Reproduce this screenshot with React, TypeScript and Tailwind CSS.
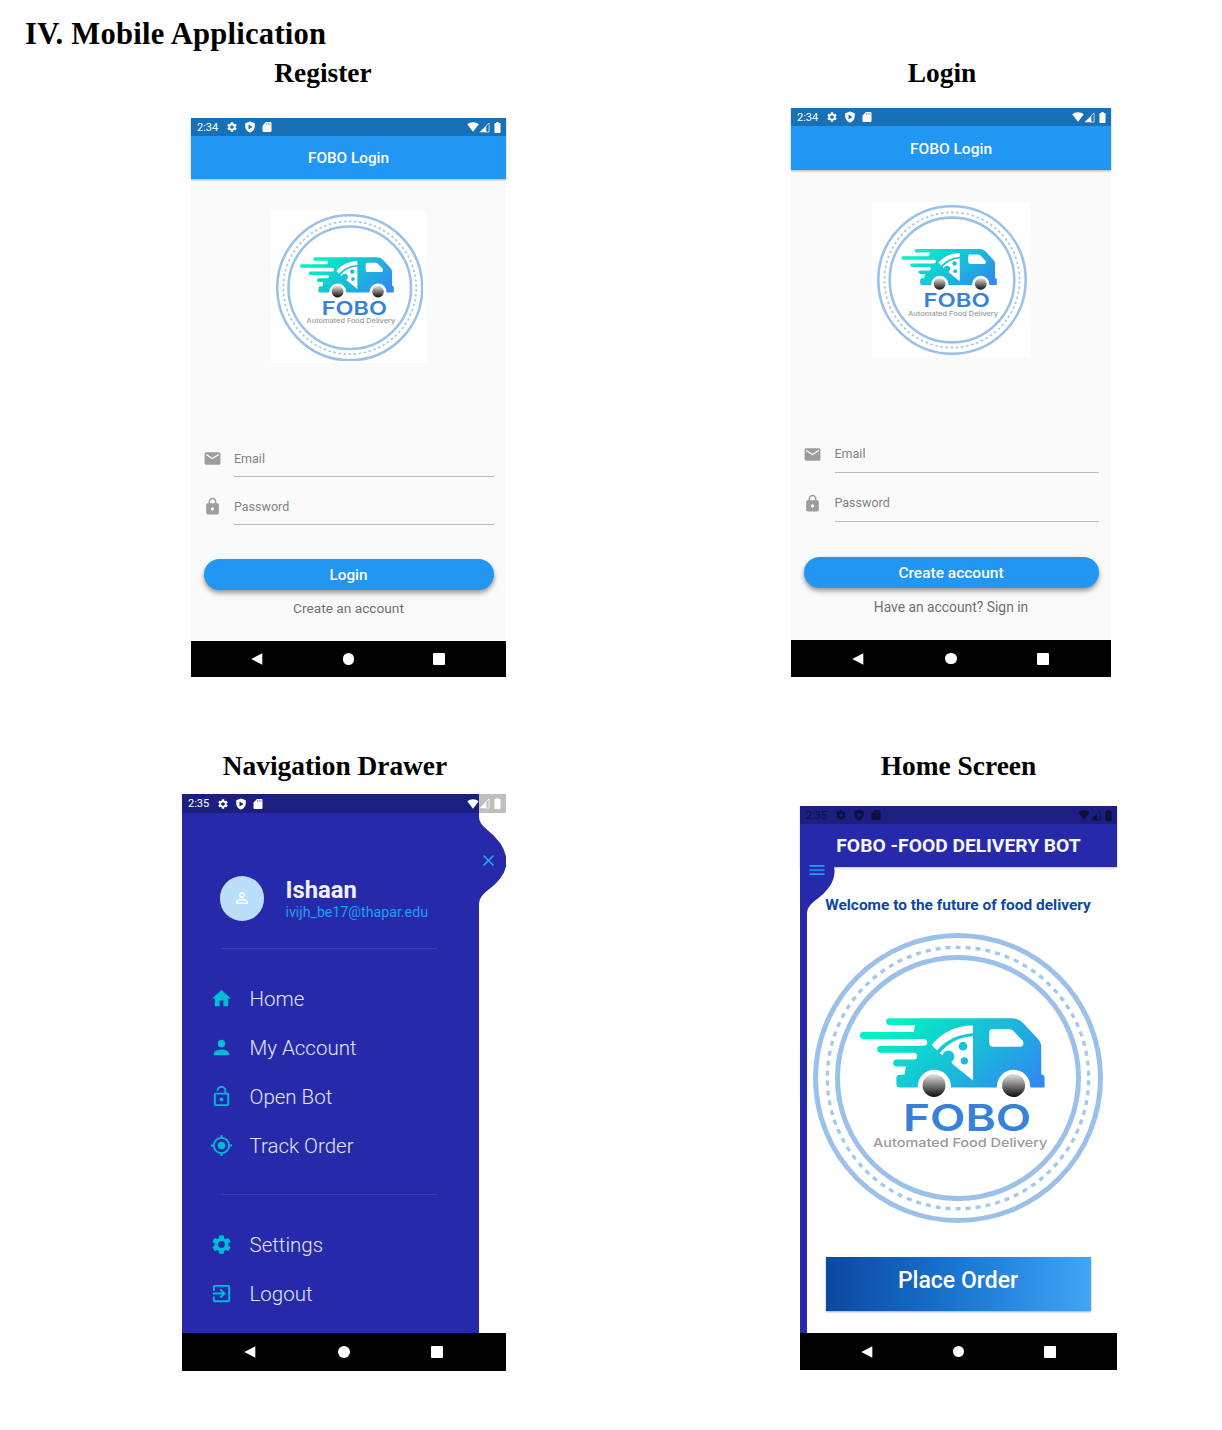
import React, { useId } from "react";
import {
  MdEmail,
  MdLock,
  MdHome,
  MdPerson,
  MdPersonOutline,
  MdLockOpen,
  MdMyLocation,
  MdSettings,
  MdExitToApp,
  MdClose,
  MdMenu,
} from "react-icons/md";

function FoboLogo({ className }: { className: string }) {
  const id = useId();
  const body = `${id}-body`;
  const wheel = `${id}-wheel`;
  return (
    <svg viewBox="38.5 24 871 871" className={className}>
      <defs>
        <linearGradient id={body} gradientUnits="userSpaceOnUse" x1="330" y1="250" x2="600" y2="560">
          <stop offset="0" stopColor="#00f2c3" />
          <stop offset="0.5" stopColor="#18bfd8" />
          <stop offset="1" stopColor="#2f8bf0" />
        </linearGradient>
        <linearGradient id={wheel} x1="0" y1="0" x2="0" y2="1">
          <stop offset="0" stopColor="#e4e4e4" />
          <stop offset="1" stopColor="#0c0c0c" />
        </linearGradient>
      </defs>
      <circle cx="474" cy="459.5" r="428" fill="#fff" stroke="#9bc1ea" strokeWidth="15" />
      <circle cx="474" cy="459.5" r="392.5" fill="none" stroke="#a6c8ec" strokeWidth="10" strokeDasharray="15 15.074" strokeDashoffset="-7" />
      <circle cx="474" cy="459.5" r="362" fill="none" stroke="#9bc1ea" strokeWidth="15" />
      <path
        fill={`url(#${body})`}
        d="M268 280H632Q655 280 668 293L713 341Q724 352 724 366V448Q734 450 734 458V488H299Q289 488 289 478V460Q289 450 299 450H313L318 425H290A10.5 10.5 0 0 1 290 404H341A10 10 0 0 0 341 384H242A10.5 10.5 0 0 1 242 363H371A10.5 10.5 0 0 0 371 342H190A10.5 10.5 0 0 1 190 321H341L345 300H268A10 10 0 0 1 268 280Z"
      />
      <path fill="#fff" d="M578 312H626Q634 312 639 317L667 346Q672 352 670 359Q668 366 660 366H580Q568 366 568 354V322Q568 312 578 312Z" />
      <path fill="#fff" d="M395 360Q442 303 519 302V325Q450 330 411 377Z" />
      <path fill="#fff" d="M519 334V467L418 386Q457 338 519 334Z" />
      <g fill={`url(#${body})`}>
        <circle cx="445" cy="395" r="18" />
        <path d="M420 386L458 414L446 420L412 392Z" />
        <circle cx="489" cy="364" r="13" />
        <circle cx="493" cy="408" r="11" />
      </g>
      <path fill="#fff" d="M353 492V485A50 50 0 0 1 453 485V492Z M591 492V485A50 50 0 0 1 691 485V492Z" />
      <circle cx="402" cy="482" r="34.5" fill={`url(#${wheel})`} />
      <circle cx="641" cy="482" r="34.5" fill={`url(#${wheel})`} />
      <text x="309" y="619" textLength="385" lengthAdjust="spacingAndGlyphs" fontFamily="Inter" fontWeight="600" fontSize="112" fill="#3582d8">
        FOBO
      </text>
      <text x="219" y="666" textLength="523" lengthAdjust="spacingAndGlyphs" fontFamily="Inter" fontWeight="500" fontSize="37" fill="#9a9a9a">
        Automated Food Delivery
      </text>
    </svg>
  );
}

function StatusBar({ time, className }: { time: string; className: string }) {
  return (
    <div className={`flex shrink-0 items-center bg-black/25 pl-[6px] pr-[5px] text-[11px] leading-none ${className}`}>
      <span className="w-[29px]">{time}</span>
      <MdSettings className="size-[12px]" />
      <svg viewBox="0 0 24 24" className="ml-[5.500px] size-[12px]" fill="currentColor">
        <path fillRule="evenodd" d="M12 1L2.500 4.500V11C2.500 16.500 6.800 21.700 12 23C17.200 21.700 21.500 16.500 21.500 11V4.500ZM9 7L17 12L9 17Z" />
      </svg>
      <svg viewBox="0 0 24 24" className="ml-[5px] size-[12px]" fill="currentColor">
        <path fillRule="evenodd" d="M10 2H19Q21 2 21 4V20Q21 22 19 22H5Q3 22 3 20V9ZM10 5V7H12V5ZM13.500 5V7H15.500V5ZM17 5V7H19V5Z" />
      </svg>
      <svg viewBox="0 0 24 24" className="ml-auto h-[12px] w-[12px]" fill="currentColor">
        <path d="M12 2.500C7.500 2.500 3.500 4 .5 6.500L12 21.500L23.500 6.500C20.500 4 16.500 2.500 12 2.500Z" />
      </svg>
      <svg viewBox="0 0 24 24" className="size-[11px]" fill="currentColor">
        <path d="M1 22.500L16 7.500V22.500Z" />
        <path d="M15 8.500L22 2V22H14" fill="none" stroke="currentColor" strokeWidth="2" opacity=".8" />
      </svg>
      <svg viewBox="0 0 12 20" className="ml-[4px] h-[11px] w-[7px]" fill="currentColor">
        <path d="M4 0H8V2H10.500Q11.500 2 11.500 3V19Q11.500 20 10.500 20H1.500Q.5 20 .5 19V3Q.5 2 1.500 2H4Z" />
      </svg>
    </div>
  );
}

function SystemNav({ className }: { className: string }) {
  return (
    <div className={`grid shrink-0 grid-cols-3 place-items-center bg-black px-[6.600%] ${className}`}>
      <svg viewBox="0 0 12 12" className="size-[12px]" fill="#fff">
        <path d="M11.300 .2V11.800L.3 6Z" />
      </svg>
      <span className="size-[11.500px] rounded-full bg-white" />
      <span className="mr-px size-[12px] rounded-[1px] bg-white" />
    </div>
  );
}

function Field({ icon, label, className }: { icon: React.ReactNode; label: string; className: string }) {
  return (
    <div className={`flex items-center ${className}`}>
      <span className="-ml-px w-[31.500px] text-[19px] text-[#9d9d9d]">{icon}</span>
      <span className="flex h-full flex-1 items-center border-b border-[#bcbcbc] pt-[2px] text-[12.500px] text-[#828282]">{label}</span>
    </div>
  );
}

function Heading({ children, className }: { children: React.ReactNode; className: string }) {
  return (
    <h2 className={`text-center font-['Liberation_Serif',serif] text-[27.400px] font-bold leading-[30px] text-black ${className}`}>
      {children}
    </h2>
  );
}

function RegisterScreen() {
  return (
    <div className="ml-[191px] mt-[30px] flex h-[559px] w-[315px] flex-col bg-[#fafafa]">
      <div className="bg-[#2196f3] text-white shadow-[0_1px_2px_rgba(0,0,0,0.3)]">
        <StatusBar time="2:34" className="h-[18px]" />
        <div className="flex h-[43px] items-center justify-center pt-[2px] text-[15.300px] font-medium">FOBO Login</div>
      </div>
      <div className="mx-auto mt-[31.500px] flex h-[152.500px] w-[156px] justify-center bg-white pl-[2px] pt-[3px]">
        <FoboLogo className="size-[147.500px]" />
      </div>
      <div className="mx-[12.500px] mt-[77px] flex flex-col gap-[11px]">
        <Field icon={<MdEmail />} label="Email" className="h-[37px]" />
        <Field icon={<MdLock />} label="Password" className="h-[37px]" />
      </div>
      <button className="mx-[12.500px] mt-[34px] h-[30.500px] rounded-full bg-[#2196f3] pt-[2px] text-[15.300px] font-medium text-white shadow-[0_3px_5px_rgba(0,0,0,0.4)]">
        Login
      </button>
      <span className="mt-[8.500px] text-center text-[13.700px] leading-[20px] text-[#707070]">Create an account</span>
      <SystemNav className="mt-auto h-[36.500px]" />
    </div>
  );
}

function LoginScreen() {
  return (
    <div className="ml-[180px] mt-[20px] flex h-[569px] w-[320px] flex-col bg-[#fafafa]">
      <div className="bg-[#2196f3] text-white shadow-[0_1px_2px_rgba(0,0,0,0.3)]">
        <StatusBar time="2:34" className="h-[18px]" />
        <div className="flex h-[43.500px] items-center justify-center pt-[3px] text-[15.500px] font-medium">FOBO Login</div>
      </div>
      <div className="mx-auto mt-[32px] flex h-[155.500px] w-[158.500px] justify-center bg-white pl-[1.500px] pt-[3.500px]">
        <FoboLogo className="size-[150px]" />
      </div>
      <div className="ml-[13px] mr-[12px] mt-[78px] flex flex-col gap-[11px]">
        <Field icon={<MdEmail />} label="Email" className="h-[38px]" />
        <Field icon={<MdLock />} label="Password" className="h-[38px]" />
      </div>
      <button className="mx-[12.500px] mt-[35px] h-[31px] rounded-full bg-[#2196f3] pt-[2px] text-[15.500px] font-medium text-white shadow-[0_3px_5px_rgba(0,0,0,0.4)]">
        Create account
      </button>
      <span className="mt-[9px] text-center text-[13.850px] leading-[20px] text-[#707070]">Have an account? Sign in</span>
      <SystemNav className="mt-auto h-[37px]" />
    </div>
  );
}

function DrawerTab({ className }: { className: string }) {
  return (
    <svg viewBox="0 0 35 110" preserveAspectRatio="none" className={className} fill="#262aaa">
      <path d="M0 0Q0 8 10 16Q34 35 35 55Q36 75 10 94Q0 102 0 110Z" />
    </svg>
  );
}

function MenuItem({ icon, label }: { icon: React.ReactNode; label: string }) {
  return (
    <li className="flex h-[49px] items-center">
      <span className="w-[39.500px] text-[23px] text-[#00bcd4]">{icon}</span>
      <span className="pt-px text-[20.500px] font-light text-[#e4e5f5]">{label}</span>
    </li>
  );
}

function DrawerScreen() {
  return (
    <div className="relative ml-[182px] mt-[13px] flex h-[577px] w-[324px] flex-col bg-white">
      <div className="relative flex flex-1 flex-col">
        <div className="mr-[27.300px] flex flex-1 flex-col bg-[#262aaa] pt-[82px]">
          <div className="flex h-[44.500px] items-center pl-[37.500px]">
            <span className="flex size-[44.500px] items-center justify-center rounded-full bg-[#bbdefb] text-white">
              <MdPersonOutline className="size-[18px]" />
            </span>
            <div className="ml-[21.500px] pt-[4px]">
              <p className="text-[23.800px] font-bold leading-[24px] text-[#f1f1fb]">Ishaan</p>
              <p className="text-[14.200px] leading-[20px] text-[#1da1f2]">ivijh_be17@thapar.edu</p>
            </div>
          </div>
          <hr className="ml-[40px] mt-[27px] w-[215px] border-[#3f43b3]" />
          <ul className="ml-[28px] mt-[25.500px]">
            <MenuItem icon={<MdHome />} label="Home" />
            <MenuItem icon={<MdPerson />} label="My Account" />
            <MenuItem icon={<MdLockOpen />} label="Open Bot" />
            <MenuItem icon={<MdMyLocation />} label="Track Order" />
          </ul>
          <hr className="ml-[40px] mt-[24px] w-[215px] border-[#3b3fb2]" />
          <ul className="ml-[28px] mt-[25px]">
            <MenuItem icon={<MdSettings />} label="Settings" />
            <MenuItem icon={<MdExitToApp />} label="Logout" />
          </ul>
        </div>
        <DrawerTab className="absolute right-0 top-[23.300px] h-[86.700px] w-[27.500px]" />
        <MdClose className="absolute right-[8.500px] top-[57px] size-[19px] text-[#1fb0f2]" />
        <div className="absolute inset-x-0 top-0 text-white">
          <StatusBar time="2:35" className="h-[19px]" />
        </div>
      </div>
      <SystemNav className="h-[38px]" />
    </div>
  );
}

function HomeScreen() {
  return (
    <div className="relative ml-[189px] mt-[25px] flex h-[564px] w-[317px] flex-col bg-white">
      <div className="bg-[#262aaa] text-[#0d0f3c] shadow-[0_1px_2px_rgba(38,42,170,0.3)]">
        <StatusBar time="2:35" className="h-[18px]" />
        <h3 className="flex h-[43px] items-center justify-center whitespace-nowrap pt-[2px] text-[19.250px] font-bold text-[#f6f6fd]">FOBO -FOOD DELIVERY BOT</h3>
      </div>
      <div className="flex flex-1 flex-col items-center border-l-[7px] border-[#262aaa] pr-[8px]">
        <p className="mt-[28px] whitespace-nowrap text-[15.450px] font-bold leading-[20px] text-[#0d47a1]">Welcome to the future of food delivery</p>
        <FoboLogo className="mt-[18px] size-[290px] shrink-0" />
        <button className="mt-[34px] h-[54px] w-[265px] shrink-0 bg-linear-to-r from-[#0d47a1] via-[#1976d2] to-[#42a5f5] pb-[6px] text-[23px] font-medium text-white shadow-[0_1px_2px_rgba(0,0,0,0.35)]">
          Place Order
        </button>
      </div>
      <DrawerTab className="absolute left-[7px] top-[21.500px] h-[85px] w-[27.500px]" />
      <MdMenu className="absolute left-[7px] top-[54px] size-[20px] text-[#1da1f2]" />
      <SystemNav className="h-[37px]" />
    </div>
  );
}

export default function App() {
  return (
    <main className="h-[1430px] w-[1222px] overflow-hidden bg-white font-['Roboto',sans-serif]">
      <h1 className="pl-[25px] pt-[16px] font-['Liberation_Serif',serif] text-[30.600px] font-bold leading-[36px] tracking-[0.240px] text-black">
        IV. Mobile Application
      </h1>
      <div className="flex pt-[6px]">
        <section className="w-[611px]">
          <Heading className="ml-[191px] w-[264px]">Register</Heading>
          <RegisterScreen />
        </section>
        <section className="w-[611px]">
          <Heading className="ml-[181px] w-[300px]">Login</Heading>
          <LoginScreen />
        </section>
      </div>
      <div className="flex pt-[74px]">
        <section className="w-[611px]">
          <Heading className="ml-[182px] w-[306px]">Navigation Drawer</Heading>
          <DrawerScreen />
        </section>
        <section className="w-[611px]">
          <Heading className="ml-[189px] w-[317px]">Home Screen</Heading>
          <HomeScreen />
        </section>
      </div>
    </main>
  );
}
